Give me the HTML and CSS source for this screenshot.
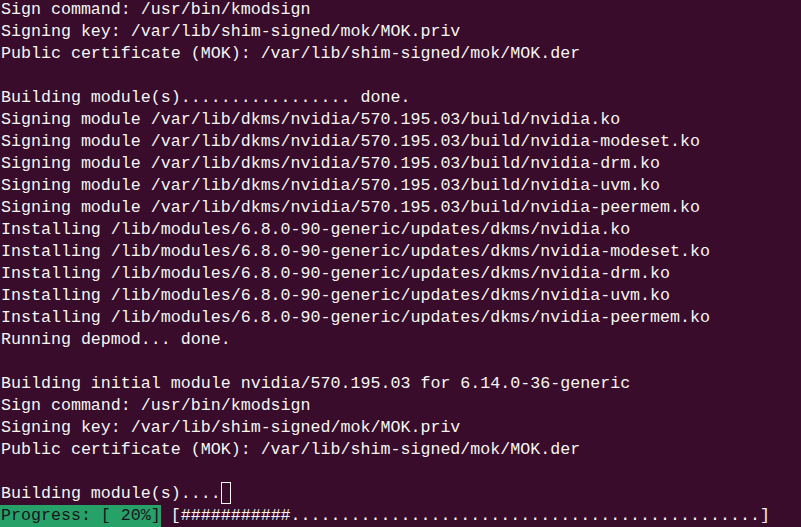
FILE: index.html
```html
<!DOCTYPE html>
<html>
<head>
<meta charset="utf-8">
<link rel="stylesheet" href="styles.css">
</head>
<body>
<div class="term">
<div class="line">Sign command: /usr/bin/kmodsign</div>
<div class="line">Signing key: /var/lib/shim-signed/mok/MOK.priv</div>
<div class="line">Public certificate (MOK): /var/lib/shim-signed/mok/MOK.der</div>
<div class="line"> </div>
<div class="line">Building module(s)................. done.</div>
<div class="line">Signing module /var/lib/dkms/nvidia/570.195.03/build/nvidia.ko</div>
<div class="line">Signing module /var/lib/dkms/nvidia/570.195.03/build/nvidia-modeset.ko</div>
<div class="line">Signing module /var/lib/dkms/nvidia/570.195.03/build/nvidia-drm.ko</div>
<div class="line">Signing module /var/lib/dkms/nvidia/570.195.03/build/nvidia-uvm.ko</div>
<div class="line">Signing module /var/lib/dkms/nvidia/570.195.03/build/nvidia-peermem.ko</div>
<div class="line">Installing /lib/modules/6.8.0-90-generic/updates/dkms/nvidia.ko</div>
<div class="line">Installing /lib/modules/6.8.0-90-generic/updates/dkms/nvidia-modeset.ko</div>
<div class="line">Installing /lib/modules/6.8.0-90-generic/updates/dkms/nvidia-drm.ko</div>
<div class="line">Installing /lib/modules/6.8.0-90-generic/updates/dkms/nvidia-uvm.ko</div>
<div class="line">Installing /lib/modules/6.8.0-90-generic/updates/dkms/nvidia-peermem.ko</div>
<div class="line">Running depmod... done.</div>
<div class="line"> </div>
<div class="line">Building initial module nvidia/570.195.03 for 6.14.0-36-generic</div>
<div class="line">Sign command: /usr/bin/kmodsign</div>
<div class="line">Signing key: /var/lib/shim-signed/mok/MOK.priv</div>
<div class="line">Public certificate (MOK): /var/lib/shim-signed/mok/MOK.der</div>
<div class="line"> </div>
<div class="line">Building module(s)....<span class="cursor"> </span></div>
<div class="line"><span class="progress">Progress: [ 20%]</span> [###########...............................................]</div>
</div>
</body>
</html>
```

FILE: styles.css
```css
html, body {
  margin: 0;
  padding: 0;
  background: #380c2a;
  height: 100%;
  overflow: hidden;
}
.term {
  padding: 0 0 0 1px;
  margin-top: -1px;
  font-family: "Liberation Mono", "DejaVu Sans Mono", monospace;
  font-size: 16.65px;
  color: #f6f6f4;
}
.line {
  height: 22px;
  line-height: 22px;
  white-space: pre;
}
.cursor {
  display: inline-block;
  width: 10px;
  height: 22px;
  vertical-align: top;
  border: 1.5px solid #f6f6f4;
  box-sizing: border-box;
  margin-top: -1px;
}
.progress {
  display: inline-block;
  background: #26a269;
  color: #1b1420;
  height: 22px;
  margin-left: -1px;
  padding-left: 1px;
}
```
